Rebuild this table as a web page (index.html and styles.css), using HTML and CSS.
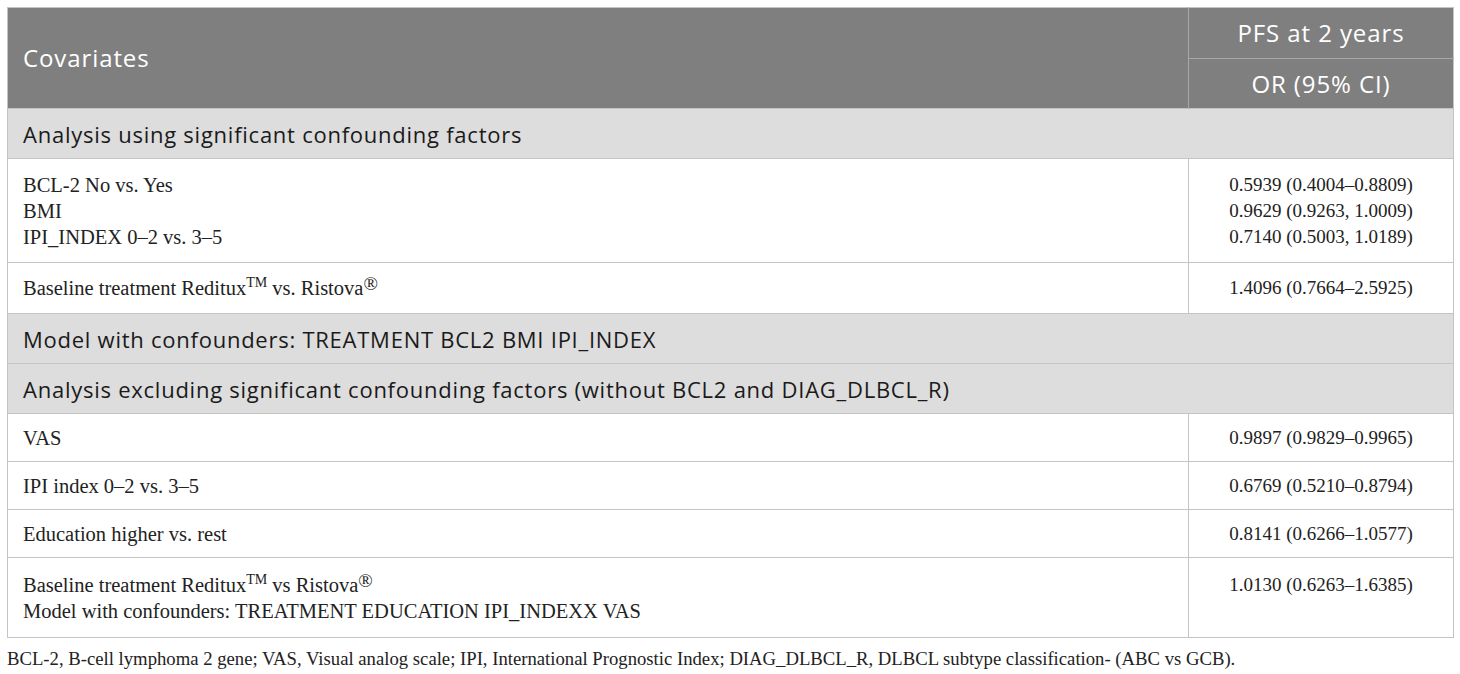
FILE: index.html
```html
<!DOCTYPE html>
<html>
<head>
<meta charset="utf-8">
<link rel="stylesheet" href="styles.css">
</head>
<body>
<div class="wrap">
<table class="tbl">
  <colgroup><col class="c1"><col class="c2"></colgroup>
  <thead>
    <tr class="h1">
      <th class="hl" rowspan="2">Covariates</th>
      <th class="hr">PFS at 2 years</th>
    </tr>
    <tr class="h2">
      <th class="hr">OR (95% CI)</th>
    </tr>
  </thead>
  <tbody>
    <tr class="sec"><td colspan="2">Analysis using significant confounding factors</td></tr>
    <tr class="row multi">
      <td>BCL-2 No vs. Yes<br>BMI<br>IPI_INDEX 0–2 vs. 3–5</td>
      <td class="val">0.5939 (0.4004–0.8809)<br>0.9629 (0.9263, 1.0009)<br>0.7140 (0.5003, 1.0189)</td>
    </tr>
    <tr class="row tall">
      <td>Baseline treatment Reditux<sup>TM</sup> vs. Ristova<sup class="reg">®</sup></td>
      <td class="val">1.4096 (0.7664–2.5925)</td>
    </tr>
    <tr class="sec"><td colspan="2">Model with confounders: TREATMENT BCL2 BMI IPI_INDEX</td></tr>
    <tr class="sec"><td colspan="2">Analysis excluding significant confounding factors (without BCL2 and DIAG_DLBCL_R)</td></tr>
    <tr class="row"><td>VAS</td><td class="val">0.9897 (0.9829–0.9965)</td></tr>
    <tr class="row"><td>IPI index 0–2 vs. 3–5</td><td class="val">0.6769 (0.5210–0.8794)</td></tr>
    <tr class="row"><td>Education higher vs. rest</td><td class="val">0.8141 (0.6266–1.0577)</td></tr>
    <tr class="row last">
      <td>Baseline treatment Reditux<sup>TM</sup> vs Ristova<sup class="reg">®</sup><br>Model with confounders: TREATMENT EDUCATION IPI_INDEXX VAS</td>
      <td class="val">1.0130 (0.6263–1.6385)</td>
    </tr>
  </tbody>
</table>
<p class="foot">BCL-2, B-cell lymphoma 2 gene; VAS, Visual analog scale; IPI, International Prognostic Index; DIAG_DLBCL_R, DLBCL subtype classification- (ABC vs GCB).</p>
</div>
</body>
</html>
```
FILE: styles.css
```css
html, body {
  margin: 0;
  padding: 0;
  background: #ffffff;
}
.wrap {
  padding: 7px 0 0 7px;
}
.tbl {
  border-collapse: collapse;
  width: 1446px;
  table-layout: fixed;
  border: 1px solid #c4c4c4;
}
.c1 { width: 1181px; }
.c2 { width: 265px; }
.tbl th {
  background: #7f7f7f;
  color: #ffffff;
  font-family: "Open Sans", Lato, sans-serif;
  font-weight: 400;
  font-size: 24px;
  letter-spacing: 0.9px;
  padding: 0;
  line-height: 30px;
}
.h1 th { height: 50px; }
.h2 th { height: 49px; }
.hl {
  text-align: left;
  padding-left: 15px !important;
  border-right: 1px solid #a8a8a8;
}
.hr {
  text-align: center;
}
.h1 .hr { border-bottom: 1px solid #a8a8a8; }
.sec td {
  background: #dddddd;
  font-family: "Open Sans", Lato, sans-serif;
  font-size: 22px;
  letter-spacing: 0.75px;
  line-height: 30px;
  color: #1a1a1a;
  height: 49px;
  padding: 0 0 0 15px;
  border-top: 1px solid #c4c4c4;
  border-bottom: 1px solid #c4c4c4;
}
.row td {
  font-family: "Liberation Serif", "Times New Roman", serif;
  font-size: 20.5px;
  color: #222222;
  border: 1px solid #c4c4c4;
  vertical-align: top;
  padding: 11px 0 10px 15px;
  line-height: 26px;
}
.row td.val {
  text-align: center;
  padding-left: 0;
  font-size: 19px;
}
.row.multi td { padding-top: 13px; padding-bottom: 12px; }
.row.tall td { padding-top: 12px; padding-bottom: 12px; }
.row.last td { padding-top: 14px; padding-bottom: 13px; }
sup {
  font-size: 14px;
  line-height: 0;
  vertical-align: 8px;
}
sup.reg {
  font-size: 19px;
  vertical-align: 5px;
}
.foot {
  margin: 10px 0 0 0;
  font-family: "Liberation Serif", "Times New Roman", serif;
  font-size: 18.7px;
  line-height: 22px;
  color: #222222;
}
```
